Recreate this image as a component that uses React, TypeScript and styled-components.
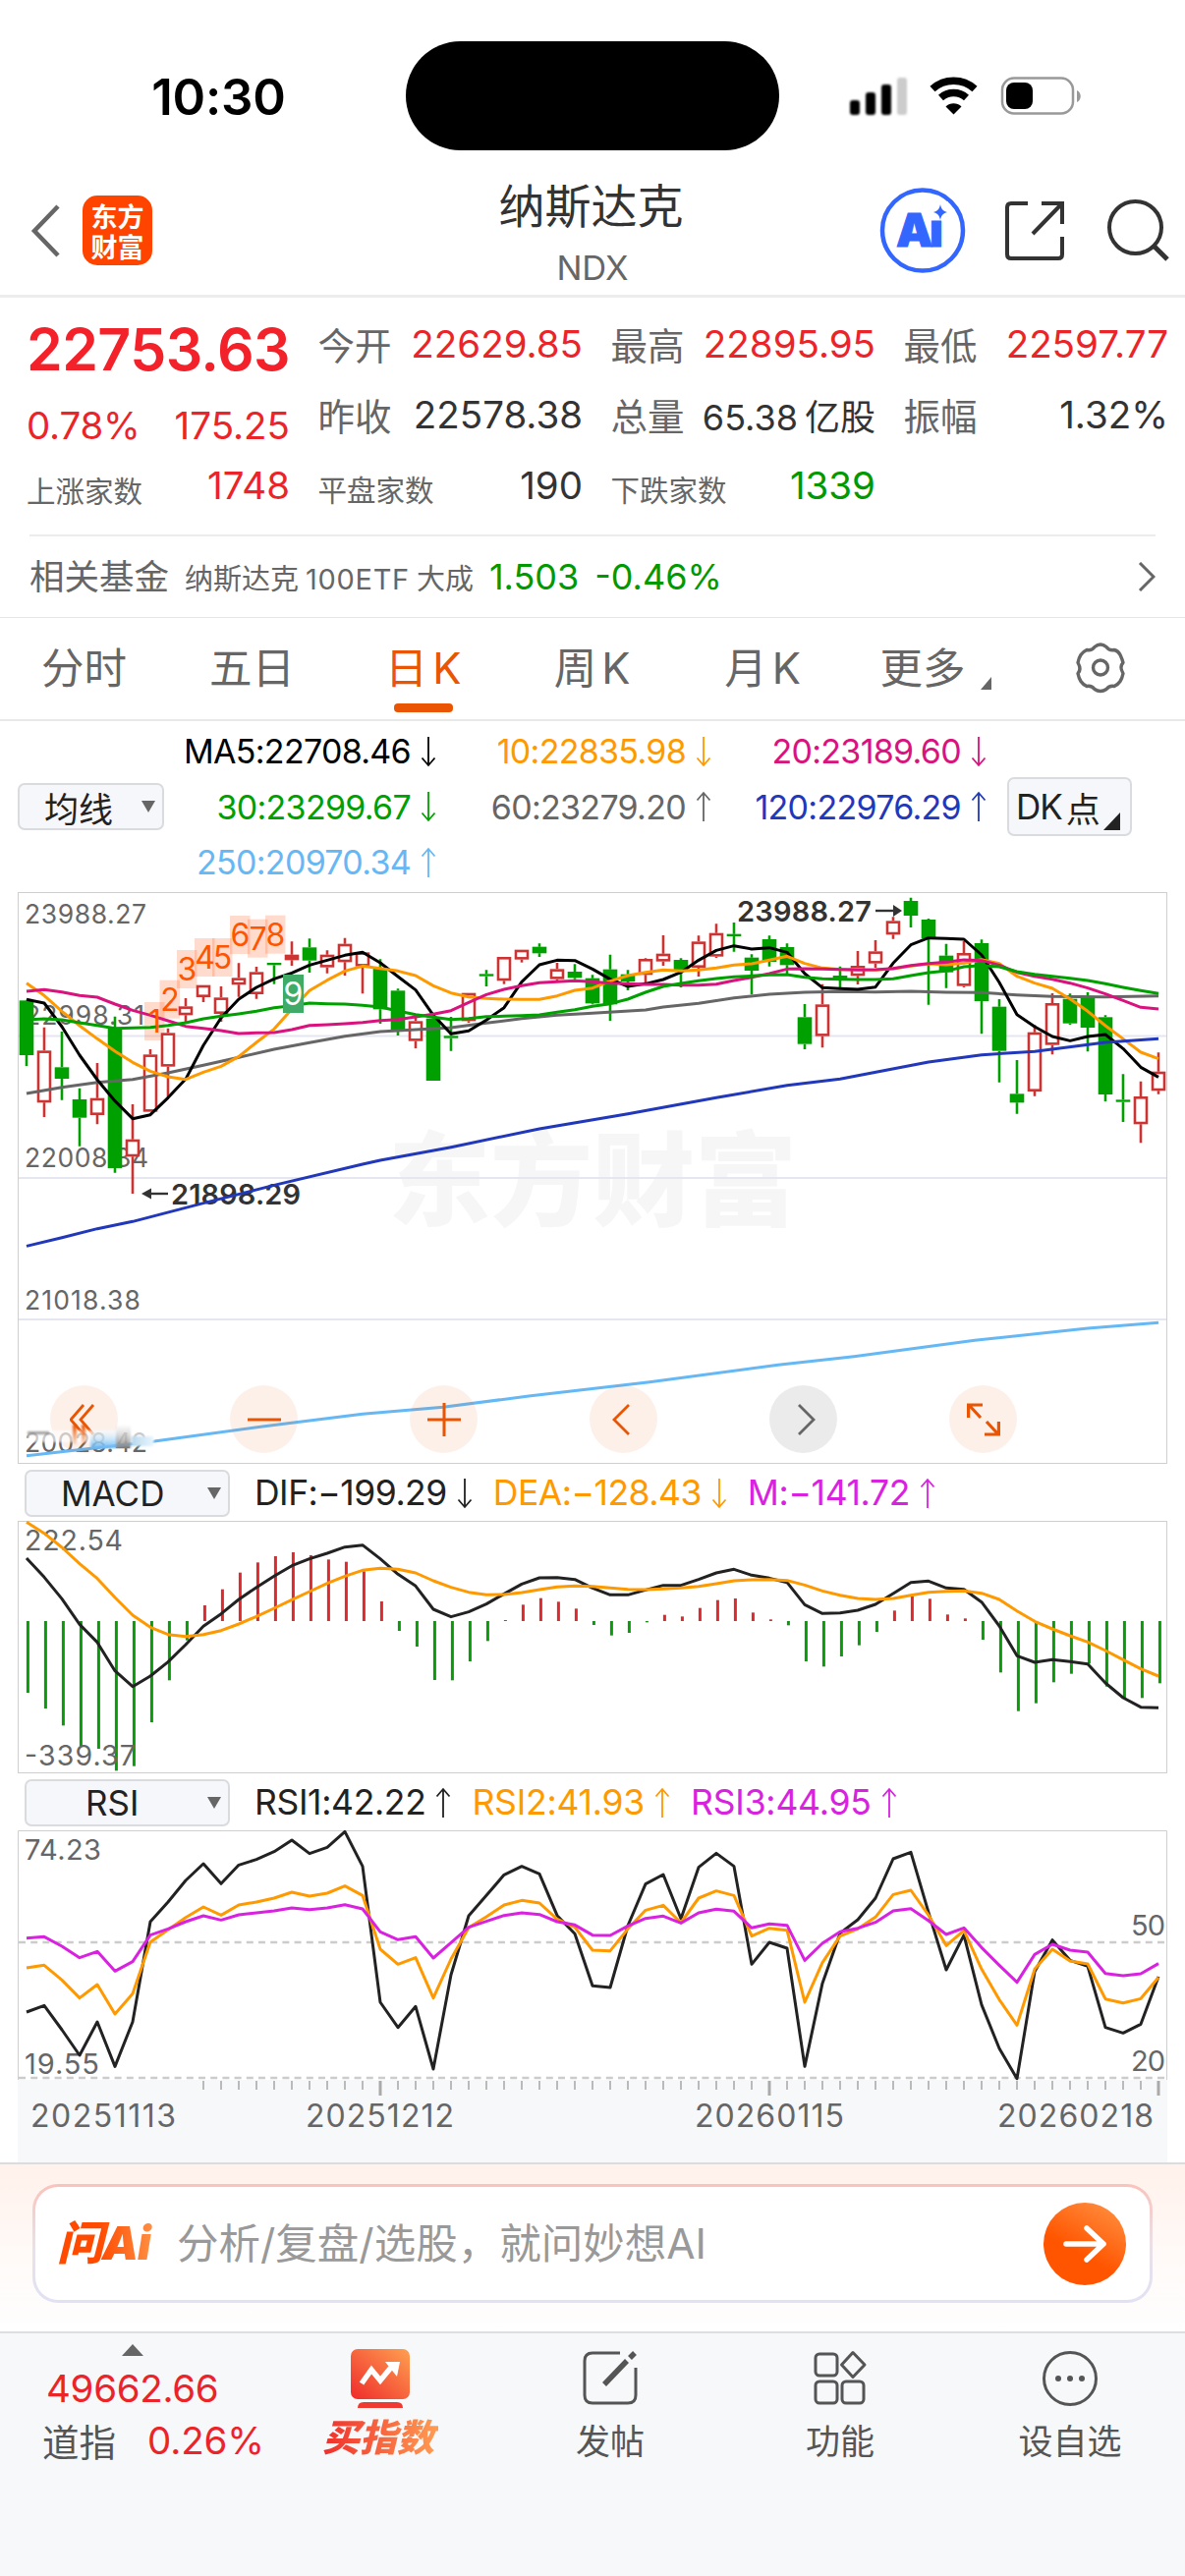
import React from "react";
import styled, { createGlobalStyle } from "styled-components";

const RED = "#eb2429";
const GREEN = "#009900";
const ACCENT = "#ea5504";
const latin = `Inter, "Noto Sans CJK SC", sans-serif`;

const Global = createGlobalStyle`
  * { box-sizing: border-box; }
  body { margin: 0; background: #fff; font-family: ${latin}; color: #666; }
  svg { display: block; flex: none; }
`;

const Page = styled.div`
  width: 1206px;
  height: 2622px;
  overflow: hidden;
  display: flex;
  flex-direction: column;
  background: #fff;
`;

/* ---------- status bar ---------- */
const StatusBar = styled.div`
  height: 180px;
  flex: none;
  display: grid;
  grid-template-columns: 413px 380px 1fr;
  padding-top: 42px;
`;
const Clock = styled.div`
  height: 111px;
  line-height: 113px;
  padding-left: 32px;
  text-align: center;
  color: #000;
  font-size: 51px;
  font-weight: 600;
  letter-spacing: -0.2px;
`;
const Island = styled.div`
  height: 111px;
  border-radius: 56px;
  background: #000;
`;
const StatusIcons = styled.div`
  height: 111px;
  display: flex;
  align-items: center;
  padding-left: 69px;
`;

/* ---------- header ---------- */
const Header = styled.header`
  height: 123px;
  flex: none;
  display: grid;
  grid-template-columns: 400px 406px 400px;
  border-bottom: 3px solid #ededed;
`;
const HeaderLeft = styled.div`
  display: flex;
  align-items: center;
  gap: 22px;
  padding: 0 0 11px 31px;
  height: 120px;
`;
const AppLogo = styled.div`
  width: 71px;
  height: 71px;
  border-radius: 15px;
  background: #ff4400;
  color: #fff;
  font-family: "Noto Sans CJK SC", sans-serif;
  font-weight: 700;
  font-size: 27px;
  display: flex;
  flex-direction: column;
  align-items: center;
  justify-content: center;
`;
const LogoLine = styled.span`
  line-height: 31px;
`;
const TitleBlock = styled.div`
  display: flex;
  flex-direction: column;
  align-items: center;
`;
const Title = styled.div`
  font-size: 47px;
  line-height: 60px;
  color: #333;
  margin-left: -3px;
`;
const Symbol = styled.div`
  font-size: 34.5px;
  line-height: 66px;
  letter-spacing: 0;
`;
const HeaderRight = styled.div`
  display: flex;
  align-items: center;
  justify-content: flex-end;
  padding: 0 16px 10px 0;
  height: 120px;
`;

/* ---------- quote ---------- */
const Quote = styled.section`
  height: 241px;
  flex: none;
  display: grid;
  grid-template-columns: repeat(4, 1fr);
  column-gap: 30px;
  padding: 11px 17px 0 27px;
`;
const QuoteCol = styled.div`
  display: flex;
  flex-direction: column;
`;
const QuoteRow = styled.div<{ $h?: number }>`
  height: ${(p) => p.$h ?? 72}px;
  display: flex;
  align-items: center;
  justify-content: space-between;
  white-space: nowrap;
`;
const Price = styled.div`
  font-size: 59px;
  font-weight: 600;
  letter-spacing: -0.6px;
  color: #f3222a;
`;
const Label = styled.span<{ $small?: boolean }>`
  font-size: ${(p) => (p.$small ? 29.5 : 37.5)}px;
  padding-top: ${(p) => (p.$small ? 7 : 0)}px;
  white-space: nowrap;
`;
const CellLabel = styled(Label)`
  margin: -1px 0 0 -1.5px;
`;
const Value = styled.span<{ $c?: string; $size?: number; $ls?: number }>`
  font-size: ${(p) => p.$size ?? 38.5}px;
  letter-spacing: ${(p) => p.$ls ?? 0}px;
  color: ${(p) => p.$c ?? "#333"};
`;
const Unit = styled.span`
  font-size: 36px;
  margin-left: 7px;
  letter-spacing: 0;
`;
const FundRow = styled.div`
  height: 84px;
  flex: none;
  margin: 0 30px;
  border-top: 2px solid #ececec;
  display: flex;
  align-items: center;
  white-space: nowrap;
`;
const FundText = styled.div`
  display: flex;
  align-items: baseline;
  padding-bottom: 5px;
`;
const FundTitle = styled.span`
  font-size: 35.5px;
  margin-right: 16px;
`;
const FundName = styled.span`
  font-size: 29px;
  margin-right: 16px;
  display: flex;
  align-items: baseline;
  gap: 7px;
`;
const FundCode = styled.span`
  letter-spacing: 0.7px;
`;
const FundValues = styled.div`
  display: flex;
  gap: 16px;
`;
const Spacer = styled.div`
  flex: 1;
`;

/* ---------- tabs ---------- */
const Tabs = styled.nav`
  height: 106px;
  flex: none;
  border-top: 1px solid #e6e6e6;
  border-bottom: 2px solid #e8e8e8;
  display: flex;
`;
const Tab = styled.div<{ $active?: boolean; $w: number }>`
  width: ${(p) => p.$w}px;
  display: flex;
  flex-direction: column;
  align-items: center;
  padding-top: 18px;
  font-size: 43.5px;
  line-height: 66px;
  color: ${(p) => (p.$active ? ACCENT : "#666")};
`;
const TabText = styled.div`
  display: flex;
  gap: 5px;
`;
const TabBar = styled.div`
  width: 60px;
  height: 9px;
  margin-top: 3px;
  border-radius: 4px;
  background: ${ACCENT};
`;

/* ---------- indicator legends ---------- */
const MaBar = styled.div`
  height: 174px;
  flex: none;
  display: grid;
  grid-template-columns: 149px 836px 127px;
  column-gap: 11px;
  align-items: center;
  padding-left: 18px;
`;
const MaGrid = styled.div`
  display: grid;
  grid-template-columns: 266px 280px 280px;
  grid-auto-rows: 56.5px;
`;
const Reading = styled.div<{ $c: string; $size?: number; $ls?: number }>`
  display: flex;
  align-items: center;
  justify-content: flex-end;
  gap: 10px;
  color: ${(p) => p.$c};
  font-size: ${(p) => p.$size ?? 34}px;
  letter-spacing: ${(p) => p.$ls ?? -0.7}px;
  white-space: nowrap;
`;
const Picker = styled.div<{ $w: number; $pad: number; $h?: number }>`
  width: ${(p) => p.$w}px;
  height: ${(p) => p.$h ?? 48}px;
  border: 2px solid #d9dbdf;
  border-radius: 7px;
  background: #f6f7fa;
  color: #222;
  font-size: 35px;
  display: flex;
  align-items: center;
  justify-content: space-between;
  padding: 0 7px 0 ${(p) => p.$pad}px;
`;
const DkButton = styled.div`
  height: 60px;
  border: 2px solid #d9dbdf;
  border-radius: 7px;
  background: #f6f7fa;
  color: #222;
  font-size: 35px;
  letter-spacing: -1px;
  display: flex;
  align-items: center;
  gap: 4px;
  padding-left: 7px;
`;
const DkCorner = styled.svg`
  align-self: flex-end;
  margin: 0 0 4px 0;
`;
const IndicatorBar = styled.div<{ $h: number }>`
  height: ${(p) => p.$h}px;
  flex: none;
  display: flex;
  align-items: center;
  padding: 1px 0 0 25px;
`;
const Readings = styled.div<{ $gap: number }>`
  display: flex;
  gap: ${(p) => p.$gap}px;
  margin-left: 25px;
`;

/* ---------- charts ---------- */
const MainChart = styled.div`
  height: 582px;
  flex: none;
  padding-left: 18px;
  position: relative;
`;
const ChartBox = styled.div<{ $h: number }>`
  height: ${(p) => p.$h}px;
  flex: none;
  padding-left: 18px;
`;
const Controls = styled.div`
  position: absolute;
  left: 51px;
  top: 502px;
  display: flex;
  gap: 114px;
`;
const Smear = styled.svg`
  position: absolute;
  left: 24px;
  top: 541px;
`;
const RoundButton = styled.div<{ $grey?: boolean }>`
  width: 69px;
  height: 69px;
  border-radius: 50%;
  background: ${(p) => (p.$grey ? "rgba(0,0,0,.08)" : "rgba(234,85,4,.085)")};
  display: flex;
  align-items: center;
  justify-content: center;
`;

/* ---------- ask bar ---------- */
const AskBar = styled.div`
  height: 174px;
  flex: none;
  border-top: 2px solid #dcdcdc;
  border-bottom: 2px solid #dcdee0;
  background: linear-gradient(#fff1eb, #fffaf8 55%, #fefefe);
  padding: 20px 33px 0;
`;
const AskFrame = styled.div`
  height: 121px;
  border-radius: 26px;
  background: linear-gradient(#f9c3bb, #ebdfe6 50%, #e0e2f4);
  padding: 3px;
`;
const AskBox = styled.div`
  height: 115px;
  border-radius: 23px;
  background: #fff;
  display: flex;
  align-items: center;
  padding: 0 24px 0 22px;
`;
const AskLogo = styled.div`
  width: 106px;
  margin-top: -1px;
  font: italic 900 47px/60px Inter, "Noto Sans CJK SC", sans-serif;
  letter-spacing: -1.2px;
  white-space: nowrap;
  color: transparent;
  background: linear-gradient(90deg, #ff4a00 40%, #ff9a4d);
  background-clip: text;
  -webkit-background-clip: text;
`;
const AskHint = styled.div`
  margin: -6px 0 0 16px;
  flex: 1;
  font-size: 42.5px;
  color: #999;
`;
const Send = styled.div`
  width: 84px;
  height: 84px;
  border-radius: 50%;
  background: linear-gradient(210deg, #ff8a3a 10%, #ff5500 60%);
  display: flex;
  align-items: center;
  justify-content: center;
`;

/* ---------- bottom nav ---------- */
const BottomNav = styled.nav`
  flex: 1;
  background: #f6f8fa;
  display: grid;
  grid-template-columns: 270px repeat(4, 234px);
`;
const IndexTicker = styled.div`
  display: flex;
  flex-direction: column;
  padding-top: 11px;
`;
const TickerTop = styled.div`
  display: flex;
  justify-content: center;
  height: 18px;
`;
const TickerLine = styled.div<{ $pad: number }>`
  height: 53px;
  padding-left: ${(p) => p.$pad}px;
  display: flex;
  align-items: center;
  gap: 32px;
  color: #555;
`;
const NavItem = styled.div`
  display: flex;
  flex-direction: column;
  align-items: center;
  padding-top: 15px;
  font-size: 35px;
  line-height: 52px;
  gap: 7px;
  color: #555;
`;
const HotLabel = styled.div`
  font: italic 900 38px/50px "Noto Sans CJK SC", sans-serif;
  color: transparent;
  background: linear-gradient(90deg, #ee2b2b, #ff9c52);
  background-clip: text;
  -webkit-background-clip: text;
  padding: 0 4px;
  margin: -5px 4px 0 0;
`;

/* ---------- data ---------- */
// Sessions are 18px apart; vertical values are thirds of a pixel from the panel origin.
const xAt = (i: number) => 27 + 18 * i;
const sub = (origin: number, v: number) => origin + v / 3;

type Candle = [kind: "g" | "r" | "f", high: number, top: number, bottom: number, low: number];
const candles: Candle[] = [
  ["g", 383, 385, 552, 585], ["r", 467, 538, 697, 741], ["g", 480, 589, 624, 689], ["g", 653, 687, 743, 830],
  ["r", 576, 683, 735, 763], ["g", 434, 471, 897, 911], ["r", 702, 809, 862, 975], ["r", 534, 550, 725, 725],
  ["r", 470, 484, 587, 680], ["r", 378, 403, 430, 453], ["r", 338, 338, 375, 390], ["r", 342, 376, 426, 450],
  ["r", 271, 316, 337, 374], ["r", 282, 298, 366, 380], ["g", 270, 270, 277, 335], ["f", 205, 245, 262, 279],
  ["g", 196, 223, 263, 300], ["r", 232, 245, 284, 302], ["r", 194, 212, 268, 309], ["r", 236, 238, 281, 364],
  ["g", 259, 285, 412, 456], ["g", 349, 355, 478, 492], ["r", 436, 448, 509, 531], ["g", 425, 440, 630, 630],
  ["g", 435, 493, 500, 539], ["r", 362, 362, 448, 453], ["g", 292, 304, 311, 342], ["r", 252, 252, 325, 335],
  ["r", 230, 230, 260, 269], ["g", 211, 221, 241, 252], ["r", 270, 289, 320, 324], ["g", 274, 297, 316, 320],
  ["g", 307, 317, 394, 397], ["g", 245, 290, 397, 447], ["g", 292, 305, 327, 354], ["r", 256, 258, 307, 330],
  ["r", 186, 242, 266, 279], ["g", 256, 261, 291, 345], ["r", 187, 205, 285, 312], ["r", 151, 179, 251, 255],
  ["g", 147, 182, 189, 236], ["g", 244, 254, 294, 367], ["g", 187, 198, 267, 281], ["g", 211, 222, 277, 307],
  ["g", 396, 436, 518, 534], ["r", 335, 397, 494, 529], ["g", 281, 309, 322, 347], ["r", 234, 279, 310, 336],
  ["r", 201, 235, 272, 285], ["r", 130, 142, 184, 197], ["g", 71, 81, 126, 162], ["g", 135, 138, 196, 398],
  ["g", 212, 248, 299, 347], ["r", 204, 240, 341, 345], ["g", 199, 210, 387, 487], ["g", 381, 404, 539, 635],
  ["g", 567, 670, 697, 731], ["r", 460, 482, 663, 677], ["r", 363, 393, 521, 550], ["g", 364, 380, 455, 459],
  ["g", 360, 377, 468, 541], ["g", 430, 436, 672, 693], ["g", 610, 688, 695, 756], ["r", 632, 678, 763, 820],
  ["r", 544, 602, 661, 671],
];
const ma5 = [382, 393, 465, 552, 627, 692, 746, 734, 682, 625, 522, 438, 381, 345, 319, 301, 277, 262, 247, 238, 270, 312, 353, 430, 487, 478, 445, 407, 328, 276, 262, 263, 289, 320, 342, 334, 321, 299, 262, 232, 218, 228, 224, 238, 303, 346, 349, 351, 344, 271, 215, 194, 196, 198, 246, 330, 428, 465, 495, 508, 495, 489, 532, 589, 619];
const ma10 = [332, 370, 418, 462, 502, 540, 574, 601, 618, 626, 604, 586, 556, 513, 472, 412, 355, 323, 295, 280, 287, 295, 309, 340, 362, 374, 379, 381, 382, 382, 371, 354, 347, 326, 309, 299, 292, 295, 292, 286, 277, 273, 262, 250, 272, 286, 290, 290, 292, 288, 280, 273, 276, 271, 260, 272, 311, 332, 348, 380, 418, 462, 502, 543, 563];
const ma20 = [357, 352, 359, 370, 375, 396, 415, 430, 447, 464, 470, 477, 486, 484, 483, 474, 461, 459, 456, 452, 446, 443, 435, 427, 416, 391, 367, 351, 340, 331, 328, 325, 328, 332, 334, 336, 336, 338, 338, 335, 324, 314, 303, 289, 288, 289, 290, 292, 291, 287, 278, 272, 268, 261, 263, 277, 299, 311, 320, 332, 347, 365, 385, 406, 411];
const ma30 = [444, 441, 444, 453, 461, 470, 469, 467, 461, 453, 441, 433, 426, 418, 407, 401, 393, 395, 396, 400, 405, 417, 428, 436, 443, 440, 434, 433, 431, 429, 421, 413, 403, 395, 381, 360, 342, 333, 325, 318, 313, 310, 307, 306, 314, 319, 320, 321, 321, 319, 309, 300, 295, 282, 278, 282, 297, 305, 311, 317, 324, 334, 345, 355, 364];
const ma60: [number, number][] = [[0, 669], [2, 650], [4, 635], [6, 626], [8, 606], [10, 583], [12, 559], [14, 534], [16, 514], [18, 494], [20, 480], [22, 474], [24, 468], [26, 454], [28, 440], [30, 430], [32, 424], [35, 414], [36, 405], [38, 394], [40, 377], [42, 366], [44, 360], [46, 358], [48, 359], [50, 357], [52, 360], [54, 361], [56, 368], [58, 373], [61, 374], [64, 371]];
const ma120: [number, number][] = [[0, 1135], [2, 1109], [4, 1082], [6, 1060], [10, 1004], [14, 949], [19, 885], [20, 873], [24, 833], [29, 777], [34, 731], [39, 682], [43, 644], [46, 625], [51, 573], [54, 551], [57, 541], [61, 513], [64, 502]];
const ma250 = "27,1481.7 157,1467 269,1451.7 369,1439.3 451,1432.3 538,1421 661,1406.7 792,1389.3 869,1380.7 992,1364.3 1107,1352 1179,1346.3";

const bars = [549, 597, 649, 712, 720, 787, 773, 639, 511, 389, 282, 233, 182, 151, 132, 120, 129, 142, 149, 178, 270, 360, 408, 510, 511, 453, 391, 327, 280, 260, 271, 292, 342, 374, 366, 334, 311, 316, 290, 266, 261, 304, 325, 343, 453, 469, 438, 404, 363, 298, 254, 262, 310, 322, 387, 487, 605, 581, 517, 491, 460, 530, 565, 565, 520];
const dif = [138, 196, 262, 340, 395, 482, 530, 498, 455, 402, 346, 308, 264, 227, 193, 161, 140, 123, 104, 98, 140, 187, 223, 294, 317, 302, 278, 247, 217, 198, 197, 203, 229, 250, 250, 235, 221, 221, 203, 183, 172, 190, 199, 212, 280, 307, 305, 297, 279, 246, 212, 208, 229, 233, 272, 345, 436, 456, 448, 454, 461, 519, 564, 593, 595];
const dea = [28, 62, 105, 155, 200, 258, 312, 349, 371, 377, 371, 359, 339, 316, 291, 265, 240, 215, 193, 175, 169, 172, 183, 207, 227, 242, 250, 249, 243, 234, 226, 223, 224, 229, 233, 234, 232, 229, 224, 216, 207, 204, 203, 206, 220, 238, 251, 261, 264, 261, 251, 242, 239, 238, 245, 264, 299, 331, 354, 375, 394, 420, 448, 476, 498];

const rsi1 = [594, 574, 648, 726, 624, 760, 624, 318, 258, 192, 141, 202, 145, 128, 104, 69, 110, 91, 43, 149, 564, 641, 577, 768, 480, 300, 238, 175, 149, 172, 299, 355, 514, 519, 330, 203, 174, 309, 152, 109, 149, 448, 381, 399, 760, 506, 353, 312, 246, 126, 106, 290, 465, 359, 572, 705, 797, 470, 374, 436, 454, 641, 658, 631, 486];
const rsi2 = [459, 451, 496, 551, 510, 600, 538, 380, 343, 305, 273, 298, 267, 258, 246, 228, 240, 231, 209, 238, 402, 448, 428, 551, 432, 336, 303, 267, 253, 261, 310, 335, 405, 407, 340, 283, 268, 321, 246, 224, 238, 362, 338, 344, 564, 443, 362, 340, 304, 235, 222, 298, 391, 345, 463, 556, 634, 463, 402, 438, 447, 554, 566, 553, 488];
const rsi3 = [368, 364, 393, 428, 409, 469, 440, 359, 340, 318, 300, 313, 297, 291, 285, 276, 281, 276, 266, 279, 349, 373, 364, 429, 382, 335, 317, 299, 291, 296, 318, 328, 359, 360, 331, 308, 301, 322, 291, 280, 286, 337, 325, 329, 436, 384, 349, 338, 320, 285, 278, 315, 357, 337, 397, 451, 503, 418, 387, 405, 411, 476, 483, 477, 446];

const series = (origin: number, data: number[]) => data.map((v, i) => `${xAt(i)},${sub(origin, v)}`).join(" ");
const sparse = (origin: number, data: [number, number][]) => data.map(([i, v]) => `${xAt(i)},${sub(origin, v)}`).join(" ");

const Line = ({ points, color, w = 3 }: { points: string; color: string; w?: number }) => (
  <polyline points={points} fill="none" stroke={color} strokeWidth={w} strokeLinejoin="round" />
);

const AxisText = ({ x, y, w, size, children }: { x: number; y: number; w: number; size: number; children: string }) => (
  <text x={x} y={y} textLength={w} fontSize={size} fill="#666" fontFamily={latin}>{children}</text>
);

const Arrow = ({ up }: { up?: boolean }) => (
  <svg width="16" height="32" viewBox="0 0 16 32" fill="none" stroke="currentColor" strokeWidth="1.8">
    {up ? <path d="M8 31V2M1.5 9.5 8 2l6.5 7.5" /> : <path d="M8 1v29M1.5 22.5 8 30l6.5-7.5" />}
  </svg>
);

const Caret = () => (
  <svg width="14" height="12" viewBox="0 0 14 12"><path d="M0 0h14L7 12z" fill="#666" /></svg>
);

const countLabels: [string, number, number][] = [
  ["1", 147, 390], ["2", 162.5, 323], ["3", 180, 231], ["4", 198, 195], ["5", 216, 195], ["6", 234, 126], ["7", 252, 137], ["8", 270, 125],
];

const PriceChart = () => (
  <svg width="1170" height="582" viewBox="18 908 1170 582">
    <text x="395" y="1240" textLength="416" fontSize="104" fontWeight="900" fill="#f6f6f6" fontFamily='"Noto Sans CJK SC", sans-serif'>东方财富</text>
    {[1054.5, 1199, 1343].map((y) => <path key={y} d={`M19 ${y}H1187`} stroke="#e6e6f0" strokeWidth="2" />)}
    <rect x="18.5" y="908.5" width="1169" height="581" fill="none" stroke="#cfcfcf" />
    <AxisText x={25} y={940} w={124} size={26.5}>23988.27</AxisText>
    <AxisText x={25} y={1043} w={122} size={26.5}>22998.31</AxisText>
    <AxisText x={25} y={1188} w={126} size={26.5}>22008.34</AxisText>
    <AxisText x={25} y={1333} w={118} size={26.5}>21018.38</AxisText>
    <AxisText x={25} y={1478} w={125} size={26.5}>20028.42</AxisText>
    {countLabels.map(([n, x, v]) => (
      <rect key={n} x={x} y={sub(890, v)} width="20.5" height="39" fill="#ff5a1f" fillOpacity=".22" />
    ))}
    {candles.map(([kind, high, top, bottom, low], i) => {
      const x = xAt(i);
      const color = kind === "g" ? "#00a000" : "#cc3333";
      const y = (v: number) => sub(890, v);
      return (
        <g key={i} stroke={color} strokeWidth="2.6">
          <path d={`M${x} ${y(high)}V${y(top)}M${x} ${y(bottom)}V${y(low)}`} />
          {kind === "r" ? (
            <rect x={x - 6} y={y(top) + 1.3} width="12" height={y(bottom) - y(top) - 2.6} fill="#fff" strokeWidth="2.6" />
          ) : (
            <rect x={x - 7.3} y={y(top)} width="14.6" height={y(bottom) - y(top)} fill={color} stroke="none" />
          )}
        </g>
      );
    })}
    <Line points={sparse(890, ma60)} color="#666" />
    <Line points={series(890, ma5)} color="#000" />
    <Line points={series(890, ma10)} color="#ff9900" />
    <Line points={series(890, ma20)} color="#d9127d" />
    <Line points={series(890, ma30)} color="#00a000" />
    <Line points={ma250} color="#66b8f5" />
    {countLabels.map(([n, x, v]) => (
      <text key={n} x={x + 10.5} y={sub(890, v) + 31} textAnchor="middle" fontSize="32" fill="#ff5500" fontFamily={latin}>{n}</text>
    ))}
    <rect x="288" y="992" width="21" height="39" fill="#3fab66" />
    <text x="298.5" y="1023" textAnchor="middle" fontSize="32" fill="#fff" fontFamily={latin}>9</text>
    <g fill="#333" fontFamily={latin} fontWeight="600" fontSize="29">
      <text x="174" y="1226" textLength="132">21898.29</text>
      <text x="750" y="938" textLength="137">23988.27</text>
    </g>
    <g stroke="#333" strokeWidth="2.4" fill="#333">
      <path d="M171 1215H152" /><path d="M144 1215l10-5.5v11z" stroke="none" />
      <path d="M891 927H911" /><path d="M918 927l-9-6v12z" stroke="none" />
    </g>
    <Line points={sparse(890, ma120)} color="#2238bb" />
  </svg>
);

const MacdChart = () => (
  <svg width="1170" height="257" viewBox="18 1548 1170 257">
    <rect x="18.5" y="1548.5" width="1169" height="256" fill="none" stroke="#cfcfcf" />
    {bars.map((v, i) => (
      <path key={i} d={`M${xAt(i) + 1.4} 1650V${sub(1540, v)}`} stroke={v > 330 ? "#0b9a0b" : "#dc2a2e"} strokeWidth="3" />
    ))}
    <AxisText x={25} y={1578} w={100} size={28.5}>222.54</AxisText>
    <AxisText x={25} y={1797} w={113} size={28.5}>-339.37</AxisText>
    <Line points={series(1540, dif)} color="#222" />
    <Line points={series(1540, dea)} color="#ff9900" />
  </svg>
);

const majorTicks = [20, 42, 64];

const RsiChart = () => (
  <svg width="1170" height="338" viewBox="18 1863 1170 338">
    <rect x="18" y="2117" width="1170" height="84" fill="#f7f8fa" />
    <path d="M18.5 2117V1863.5H1187.5V2117" fill="none" stroke="#cfcfcf" />
    <path d="M19 1977H1187M19 2115H1187" stroke="#ccc" strokeWidth="2.4" strokeDasharray="7 5.2" />
    {candles.map((_, i) =>
      i < 10 ? null : (
        <path key={i} d={`M${xAt(i)} 2118V${majorTicks.includes(i) ? 2133 : 2127}`} stroke="#aaa" strokeWidth={majorTicks.includes(i) ? 3 : 1.6} />
      )
    )}
    <AxisText x={25} y={1893} w={78} size={29}>74.23</AxisText>
    <AxisText x={25} y={2111} w={76} size={29}>19.55</AxisText>
    <AxisText x={1151} y={1970} w={35} size={29}>50</AxisText>
    <AxisText x={1151} y={2108} w={35} size={29}>20</AxisText>
    <Line points={series(1850, rsi1)} color="#222" />
    <Line points={series(1850, rsi2)} color="#ff9900" />
    <Line points={series(1850, rsi3)} color="#d822e0" />
    <AxisText x={31} y={2165} w={148} size={32}>20251113</AxisText>
    <AxisText x={311} y={2165} w={151} size={32}>20251212</AxisText>
    <AxisText x={707} y={2165} w={152} size={32}>20260115</AxisText>
    <AxisText x={1015} y={2165} w={159} size={32}>20260218</AxisText>
  </svg>
);

const Cell = ({ label, small, children }: { label: string; small?: boolean; children: React.ReactNode }) => (
  <QuoteRow><CellLabel $small={small}>{label}</CellLabel>{children}</QuoteRow>
);

export default function App() {
  return (
    <Page>
      <Global />
      <StatusBar>
        <Clock>10:30</Clock>
        <Island />
        <StatusIcons>
          <svg width="240" height="44" viewBox="862 76 240 44">
            <defs>
              <filter id="soft"><feGaussianBlur stdDeviation="1" /></filter>
            </defs>
            <g filter="url(#soft)">
              <rect x="865" y="102" width="10" height="15" rx="3" />
              <rect x="881" y="94" width="10" height="23" rx="3" />
              <rect x="897" y="86" width="10" height="31" rx="3" />
              <rect x="913" y="79" width="10" height="38" rx="3" fill="#ccc" />
            </g>
            <path d="M970.5 116.5 962.5 108.5a11.5 11.5 0 0 1 16 0z" />
            <path d="M957.5 99.5a19.5 19.5 0 0 1 26 0M949 90.5a32 32 0 0 1 43 0" fill="none" stroke="#000" strokeWidth="7.5" />
            <rect x="1020" y="79.5" width="72" height="36" rx="12" fill="none" stroke="#999" strokeWidth="2.5" />
            <rect x="1024" y="84" width="27" height="27" rx="8" />
            <path d="M1096 92c5 2 5 10 0 12z" fill="#999" />
          </svg>
        </StatusIcons>
      </StatusBar>

      <Header>
        <HeaderLeft>
          <svg width="31" height="54" viewBox="0 0 31 54" fill="none" stroke="#666" strokeWidth="4.5"><path d="M28 2 4 27l24 25" /></svg>
          <AppLogo><LogoLine>东方</LogoLine><LogoLine>财富</LogoLine></AppLogo>
        </HeaderLeft>
        <TitleBlock>
          <Title>纳斯达克</Title>
          <Symbol>NDX</Symbol>
        </TitleBlock>
        <HeaderRight>
          <svg width="296" height="90" viewBox="894 190 296 90" fill="none">
            <circle cx="939" cy="234.5" r="41" stroke="#3366ff" strokeWidth="4.5" />
            <text x="912" y="251" fontSize="47" fontWeight="900" fill="#3366ff" stroke="#3366ff" strokeWidth="1" fontFamily={latin} textLength="48">Ai</text>
            <rect x="945" y="205" width="20" height="18" fill="#fff" />
            <path d="M957 208c1 5 3 7 7 8-4 1-6 3-7 8-1-5-3-7-7-8 4-1 6-3 7-8z" fill="#3366ff" />
            <g stroke="#333" strokeWidth="4">
              <path d="M1046 207h-17q-4 0-4 4v48q0 4 4 4h48q4 0 4-4v-18" />
              <path d="M1060 207h21v21M1081 207 1051 238" />
              <circle cx="1155.5" cy="231.5" r="26.5" />
              <path d="M1174 250l14 14" strokeWidth="5" />
            </g>
          </svg>
        </HeaderRight>
      </Header>

      <Quote>
        <QuoteCol>
          <QuoteRow $h={82}><Price>22753.63</Price></QuoteRow>
          <QuoteRow $h={74}><Value $c={RED} $ls={-0.2}>0.78%</Value><Value $c={RED}>175.25</Value></QuoteRow>
          <QuoteRow $h={48}><Label $small>上涨家数</Label><Value $c={RED}>1748</Value></QuoteRow>
        </QuoteCol>
        <QuoteCol>
          <Cell label="今开"><Value $c={RED}>22629.85</Value></Cell>
          <Cell label="昨收"><Value>22578.38</Value></Cell>
          <Cell label="平盘家数" small><Value>190</Value></Cell>
        </QuoteCol>
        <QuoteCol>
          <Cell label="最高"><Value $c={RED}>22895.95</Value></Cell>
          <Cell label="总量"><Value $size={36}>65.38<Unit>亿股</Unit></Value></Cell>
          <Cell label="下跌家数" small><Value $c={GREEN}>1339</Value></Cell>
        </QuoteCol>
        <QuoteCol>
          <Cell label="最低"><Value $c={RED}>22597.77</Value></Cell>
          <Cell label="振幅"><Value>1.32%</Value></Cell>
        </QuoteCol>
      </Quote>
      <FundRow>
        <FundText>
          <FundTitle>相关基金</FundTitle>
          <FundName><span>纳斯达克</span><FundCode>100ETF</FundCode><span>大成</span></FundName>
          <FundValues>
            <Value $c={GREEN} $size={36}>1.503</Value>
            <Value $c={GREEN} $size={36}>-0.46%</Value>
          </FundValues>
        </FundText>
        <Spacer />
        <svg width="18" height="30" viewBox="0 0 18 30" fill="none" stroke="#666" strokeWidth="3"><path d="m2 1 14 14L2 29" /></svg>
      </FundRow>

      <Tabs>
        <Tab $w={171}>分时</Tab>
        <Tab $w={171}>五日</Tab>
        <Tab $w={177} $active><TabText>日<span>K</span></TabText><TabBar /></Tab>
        <Tab $w={167}><TabText>周<span>K</span></TabText></Tab>
        <Tab $w={180}><TabText>月<span>K</span></TabText></Tab>
        <Tab $w={173}>
          <TabText>
            更多
            <svg width="22" height="66" viewBox="0 0 22 66"><path d="M21 42v13H10z" fill="#666" /></svg>
          </TabText>
        </Tab>
        <Tab $w={162}>
          <svg width="52" height="60" viewBox="-26 -33 52 60" fill="none" stroke="#666" strokeWidth="3.4" strokeLinejoin="round">
            <path d="M-14 -18.5q5 1 8 -3 3 -2.5 6 -2.5t6 2.5q3 4 8 3 4 1 6 5t3 8q-4 4 0 11 -1 5 -3 8t-6 5q-5 -1 -8 3 -3 2 -6 2t-6 -2q-3 -4 -8 -3 -4 -2 -6 -5t-3 -8q4 -4 0 -11 1 -5 3 -8t6 -5z" />
            <circle cy="-0.5" r="7.5" />
          </svg>
        </Tab>
      </Tabs>

      <MaBar>
        <Picker $w={149} $pad={25}>均线<Caret /></Picker>
        <MaGrid>
          <Reading $c="#000">MA5:22708.46<Arrow /></Reading>
          <Reading $c="#ff9900">10:22835.98<Arrow /></Reading>
          <Reading $c="#d9127d">20:23189.60<Arrow /></Reading>
          <Reading $c="#00a000">30:23299.67<Arrow /></Reading>
          <Reading $c="#666">60:23279.20<Arrow up /></Reading>
          <Reading $c="#2238bb">120:22976.29<Arrow up /></Reading>
          <Reading $c="#66b8f5">250:20970.34<Arrow up /></Reading>
        </MaGrid>
        <DkButton>
          <span>DK</span><span>点</span>
          <DkCorner width="17" height="18" viewBox="0 0 17 18"><path d="M17 0v18H0z" fill="#222" /></DkCorner>
        </DkButton>
      </MaBar>

      <MainChart>
        <PriceChart />
        <Controls>
          <RoundButton><svg width="30" height="32" viewBox="0 0 30 32" fill="none" stroke={ACCENT} strokeWidth="2.8"><path d="M14 1 1 16l13 15M24 1 11 16l13 15" /></svg></RoundButton>
          <RoundButton><svg width="34" height="34" viewBox="0 0 34 34" stroke={ACCENT} strokeWidth="3"><path d="M0 17h34" /></svg></RoundButton>
          <RoundButton><svg width="34" height="34" viewBox="0 0 34 34" stroke={ACCENT} strokeWidth="3"><path d="M0 17h34M17 0v34" /></svg></RoundButton>
          <RoundButton><svg width="24" height="32" viewBox="0 0 24 32" fill="none" stroke={ACCENT} strokeWidth="2.8"><path d="M17 1 2 16l15 15" /></svg></RoundButton>
          <RoundButton $grey><svg width="24" height="32" viewBox="0 0 24 32" fill="none" stroke="#666" strokeWidth="2.8"><path d="m7 1 15 15L7 31" /></svg></RoundButton>
          <RoundButton><svg width="34" height="34" viewBox="0 0 34 34" fill="none" stroke={ACCENT} strokeWidth="3.2"><path d="M1.6 15V2H16M2 2l12 13M32.4 19v13H18M32 32 20 19" /></svg></RoundButton>
        </Controls>
        <Smear width="136" height="26" viewBox="24 1449 136 26">
          <defs>
            <linearGradient id="fadeBlue" x1="0" y1="0" x2="0" y2="1"><stop offset="0" stopColor="#fff" stopOpacity="0" /><stop offset="1" stopColor="#66b8f5" /></linearGradient>
            <linearGradient id="fadeGrey" x1="0" y1="0" x2="0" y2="1"><stop offset="0" stopColor="#ddd" stopOpacity=".2" /><stop offset="1" stopColor="#858585" /></linearGradient>
            <linearGradient id="fadeOrange" x1="0" y1="0" x2="0" y2="1"><stop offset="0" stopColor={ACCENT} /><stop offset="1" stopColor={ACCENT} stopOpacity=".15" /></linearGradient>
            <linearGradient id="fadeRight"><stop offset="0" stopColor="#b9d9ee" /><stop offset="1" stopColor="#e8f5fe" /></linearGradient>
            <filter id="smear"><feGaussianBlur stdDeviation="1.2" /></filter>
          </defs>
          <rect x="28" y="1456" width="128" height="12" fill="#fff" fillOpacity=".65" filter="url(#smear)" />
          <g filter="url(#smear)">
            <rect x="92" y="1452" width="28" height="22" fill="url(#fadeBlue)" />
            <rect x="118" y="1451" width="15" height="23" fill="url(#fadeGrey)" />
            <rect x="134" y="1462" width="22" height="10" fill="url(#fadeRight)" />
            <rect x="74" y="1450" width="4" height="20" fill="url(#fadeOrange)" />
            <rect x="83" y="1450" width="4" height="20" fill="url(#fadeOrange)" />
            <rect x="28" y="1457" width="22" height="3" fill="#777" fillOpacity=".7" />
          </g>
        </Smear>
      </MainChart>

      <IndicatorBar $h={58}>
        <Picker $w={209} $pad={35}>MACD<Caret /></Picker>
        <Readings $gap={21}>
          <Reading $c="#222" $size={35.5} $ls={-0.5}>DIF:−199.29<Arrow /></Reading>
          <Reading $c="#ff9900" $size={35.5} $ls={-0.5}>DEA:−128.43<Arrow /></Reading>
          <Reading $c="#d822e0" $size={35.5} $ls={-0.35}>M:−141.72<Arrow up /></Reading>
        </Readings>
      </IndicatorBar>
      <ChartBox $h={257}><MacdChart /></ChartBox>
      <IndicatorBar $h={58}>
        <Picker $w={209} $pad={60}>RSI<Caret /></Picker>
        <Readings $gap={21}>
          <Reading $c="#222" $size={35.5} $ls={-0.35}>RSI1:42.22<Arrow up /></Reading>
          <Reading $c="#ff9900" $size={35.5} $ls={-0.2}>RSI2:41.93<Arrow up /></Reading>
          <Reading $c="#d822e0" $size={35.5} $ls={-0.2}>RSI3:44.95<Arrow up /></Reading>
        </Readings>
      </IndicatorBar>
      <ChartBox $h={338}><RsiChart /></ChartBox>

      <AskBar>
        <AskFrame>
          <AskBox>
            <AskLogo>问Ai</AskLogo>
            <AskHint>分析/复盘/选股，就问妙想AI</AskHint>
            <Send>
              <svg width="44" height="38" viewBox="0 0 44 38" fill="none" stroke="#fff" strokeWidth="5.5" strokeLinecap="round" strokeLinejoin="round"><path d="M3 19h38M24 3l17 16-17 16" /></svg>
            </Send>
          </AskBox>
        </AskFrame>
      </AskBar>

      <BottomNav>
        <IndexTicker>
          <TickerTop><svg width="22" height="12" viewBox="0 0 22 12"><path d="M0 12 11 0l11 12z" fill="#666" /></svg></TickerTop>
          <TickerLine $pad={47}><Value $c={RED} $ls={-0.3}>49662.66</Value></TickerLine>
          <TickerLine $pad={43}><Label>道指</Label><Value $c={RED} $ls={-0.1}>0.26%</Value></TickerLine>
        </IndexTicker>
        <NavItem>
          <svg width="62" height="62" viewBox="0 0 62 62">
            <defs>
              <linearGradient id="hot" x1="0" y1="1" x2="1" y2="0"><stop offset="0" stopColor="#ee2b2b" /><stop offset="1" stopColor="#ffa050" /></linearGradient>
            </defs>
            <rect x="1" y="1" width="60" height="51" rx="7" fill="url(#hot)" />
            <path d="M8 61q0-6 6-6h34q6 0 6 6z" fill="#ee3a30" />
            <path d="m12 36 10-14 9 11 14-17" fill="none" stroke="#fff" strokeWidth="5.5" />
            <path d="M36 14h15l-3 15z" fill="#fff" />
          </svg>
          <HotLabel>买指数</HotLabel>
        </NavItem>
        <NavItem>
          <svg width="58" height="62" viewBox="0 0 58 62" fill="none" stroke="#555" strokeWidth="3">
            <path d="M39 5H11q-8 0-8 8v35q0 8 8 8h36q8 0 8-8V20" />
            <path d="M23 37 46 13M49 10l5-5" strokeWidth="5.5" />
          </svg>
          发帖
        </NavItem>
        <NavItem>
          <svg width="56" height="62" viewBox="0 0 56 62" fill="none" stroke="#555" strokeWidth="3">
            <rect x="3" y="6" width="22" height="22" rx="4" /><rect x="3" y="34" width="22" height="22" rx="4" /><rect x="30" y="34" width="22" height="22" rx="4" />
            <path d="M41 4.5 53 17 41 29.5 29.5 17z" strokeLinejoin="round" />
          </svg>
          功能
        </NavItem>
        <NavItem>
          <svg width="58" height="62" viewBox="0 0 58 62">
            <circle cx="29" cy="31" r="26.5" fill="none" stroke="#555" strokeWidth="3" />
            {[17, 29, 41].map((x) => <circle key={x} cx={x} cy="31" r="3" fill="#555" />)}
          </svg>
          设自选
        </NavItem>
      </BottomNav>
    </Page>
  );
}
